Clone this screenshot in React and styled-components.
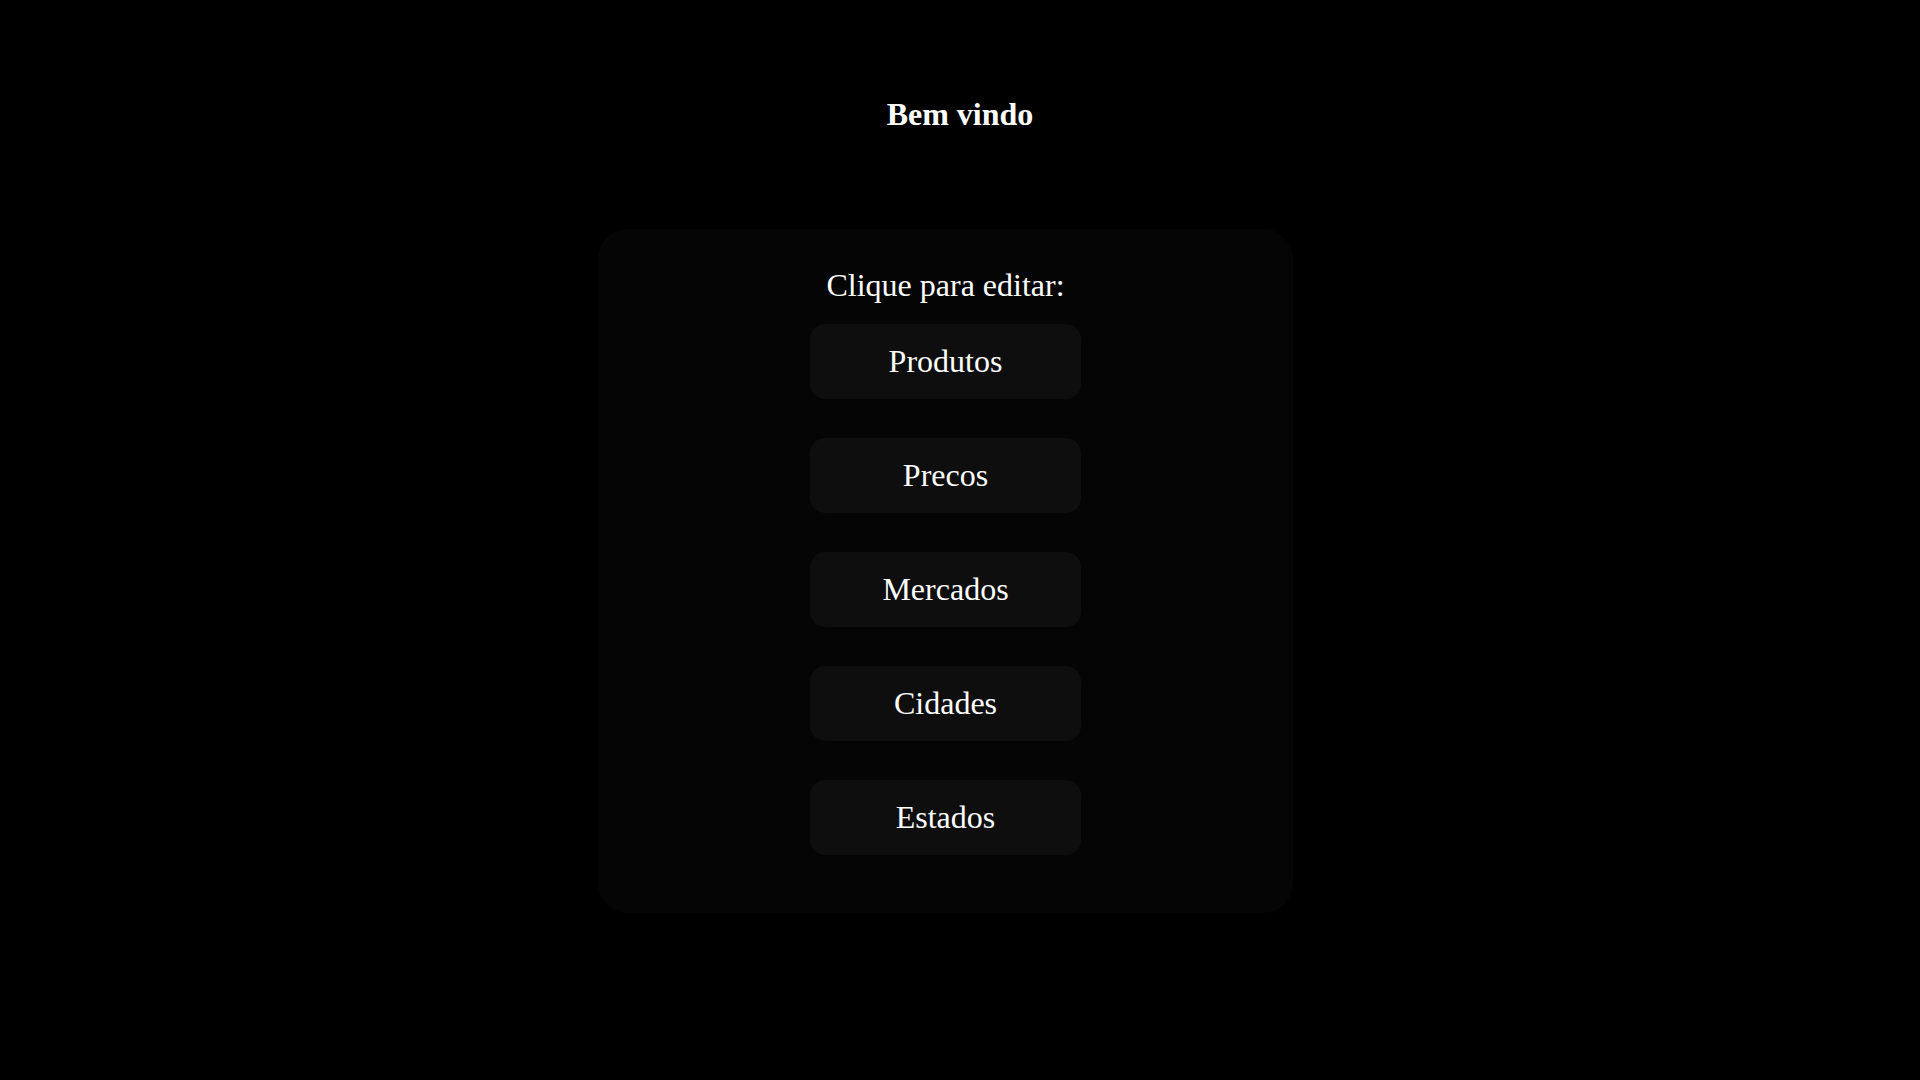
import React from 'react';
import styled, { createGlobalStyle } from 'styled-components';

const GlobalStyle = createGlobalStyle`
  body {
    margin: 0;
    background: #000;
    color: #fff;
    font-family: "Liberation Serif", "Times New Roman", serif;
  }
`;

const Page = styled.div`
  min-height: 1080px;
  background: #000;
  padding-top: 96px;
  box-sizing: border-box;
`;

const Title = styled.h1`
  margin: 0;
  font-size: 32px;
  font-weight: bold;
  text-align: center;
  line-height: 37px;
`;

const Main = styled.main`
  display: flex;
  justify-content: center;
  padding-right: 29px;
  margin-top: 96px;
`;

const Card = styled.section`
  width: 695px;
  box-sizing: border-box;
  background: #050505;
  border-radius: 30px;
  padding: 38px 0 58px;
  display: flex;
  flex-direction: column;
  align-items: center;
`;

const Subtitle = styled.p`
  margin: 0 0 20px;
  font-size: 32px;
  line-height: 37px;
`;

const MenuList = styled.div`
  display: flex;
  flex-direction: column;
  gap: 39px;
`;

const MenuButton = styled.button`
  width: 271px;
  height: 75px;
  border: none;
  border-radius: 15px;
  background: #0e0e0e;
  color: #fff;
  font-family: "Liberation Serif", "Times New Roman", serif;
  font-size: 32px;
  cursor: pointer;

  &:hover {
    background: #161616;
  }
`;

const items = ['Produtos', 'Precos', 'Mercados', 'Cidades', 'Estados'];

const App = () => {
  return (
    <>
      <GlobalStyle />
      <Page>
        <Title>Bem vindo</Title>
        <Main>
          <Card>
            <Subtitle>Clique para editar:</Subtitle>
            <MenuList>
              {items.map((item) => (
                <MenuButton key={item}>{item}</MenuButton>
              ))}
            </MenuList>
          </Card>
        </Main>
      </Page>
    </>
  );
};

export default App;
